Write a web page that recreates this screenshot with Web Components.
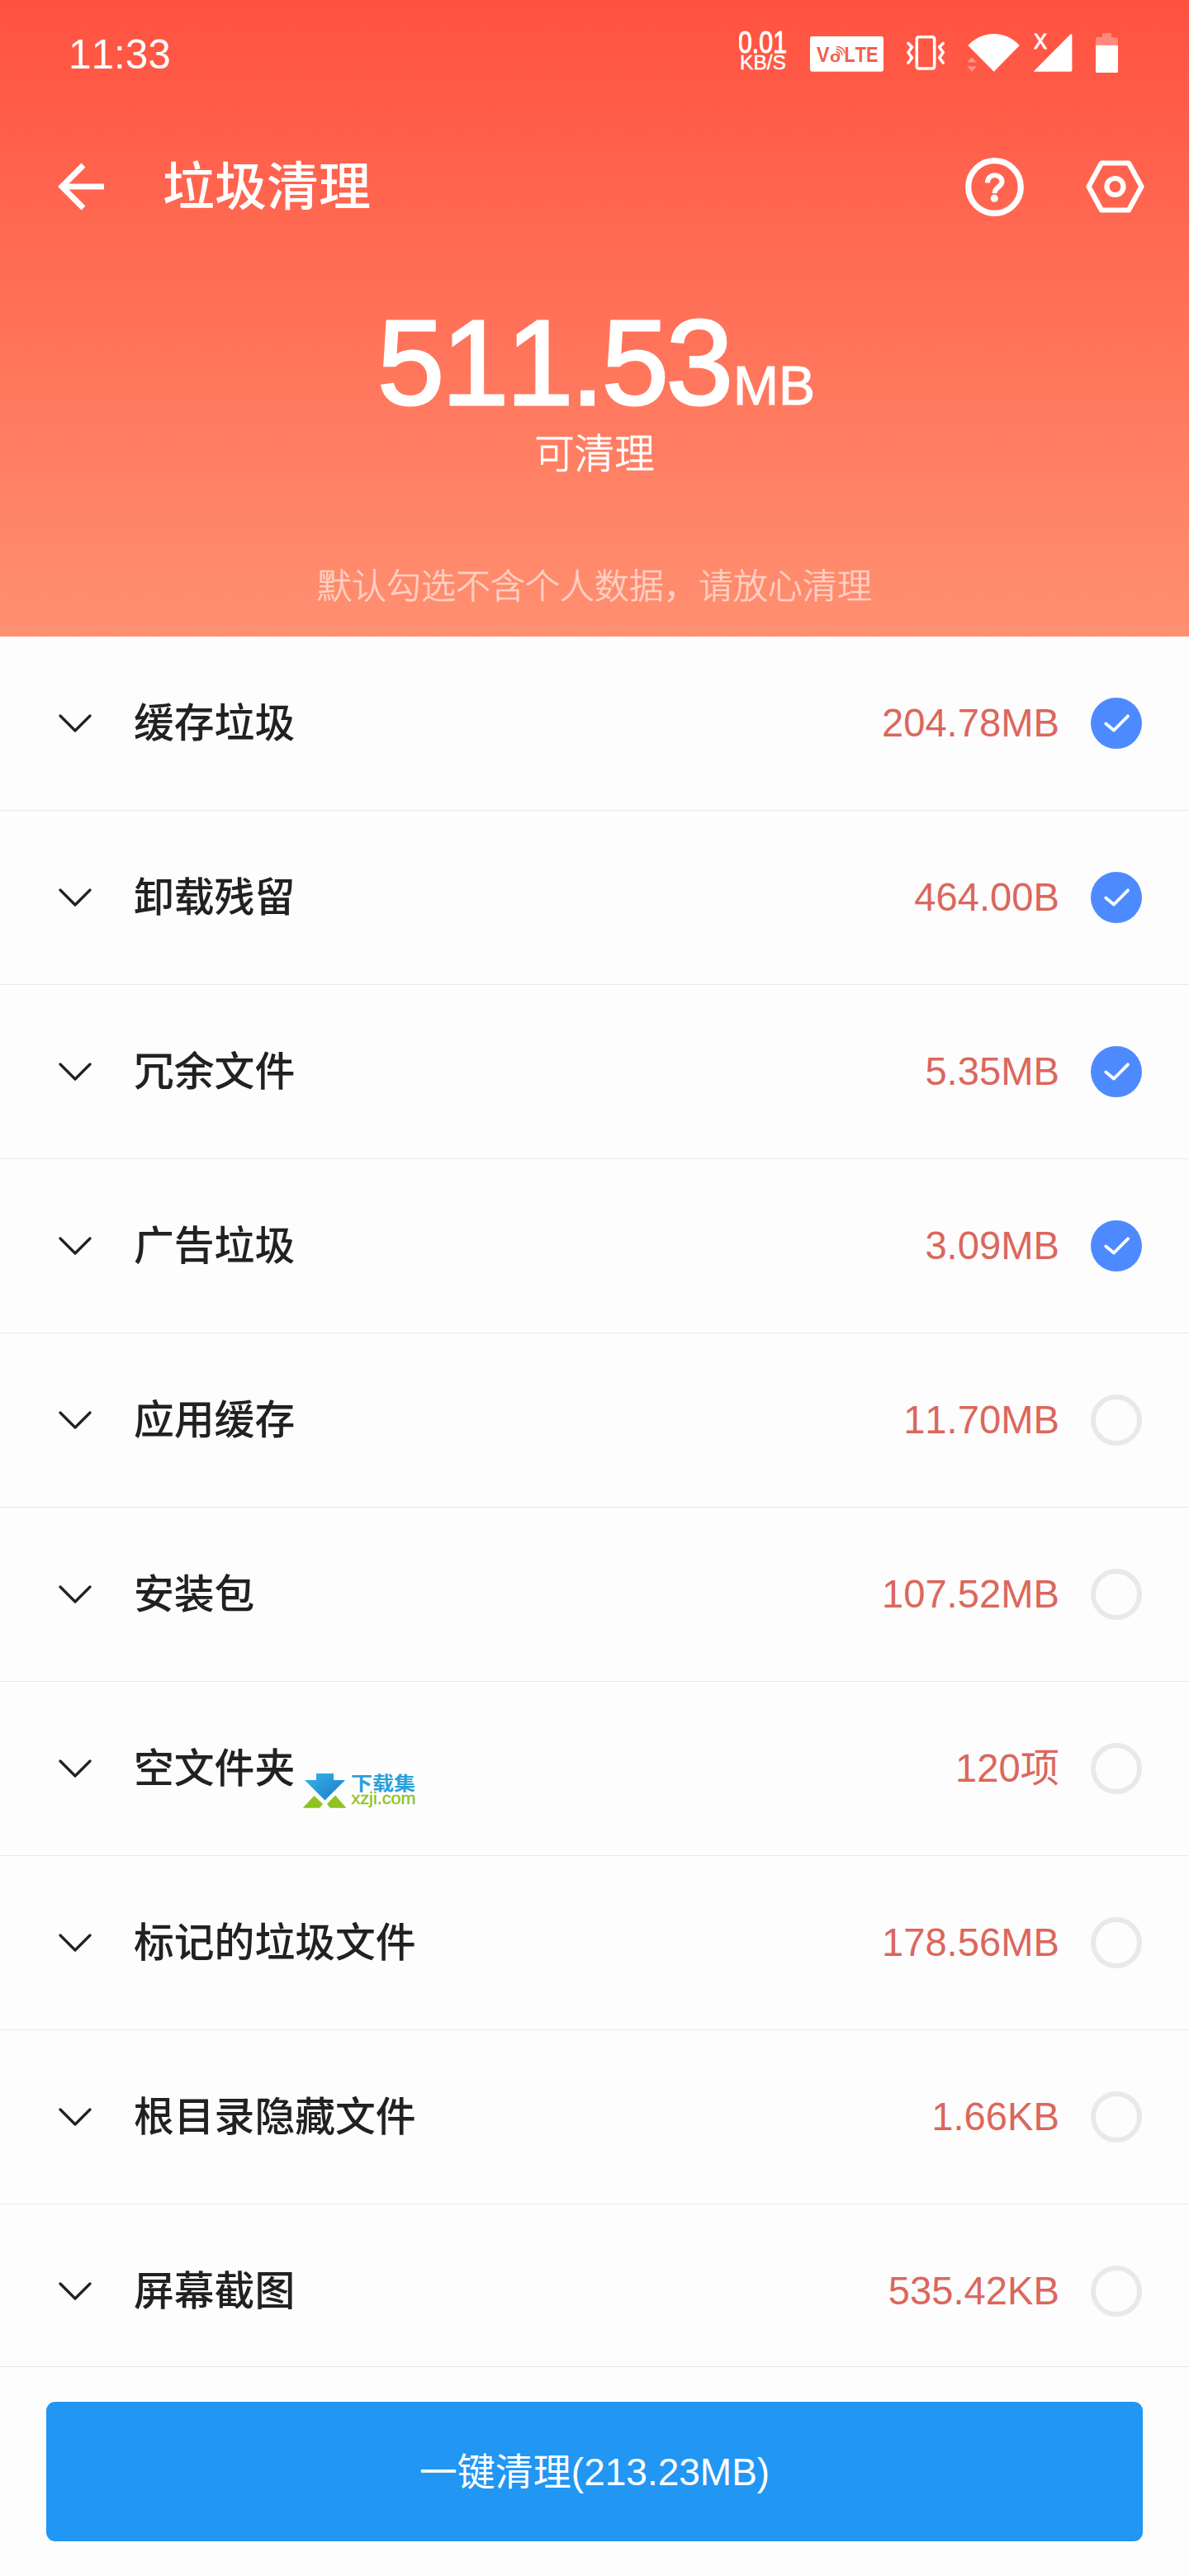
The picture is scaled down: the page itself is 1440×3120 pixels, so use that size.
<!DOCTYPE html>
<html lang="zh-CN">
<head>
<meta charset="utf-8">
<title>垃圾清理</title>
<style>
    body {
        margin: 0;
        background: #fdfdfd;
        font-family: "Liberation Sans", "Noto Sans CJK SC", sans-serif;
        font-kerning: none;
    }
</style>
</head>
<body>
<clean-page>
    <clean-header slot="header" total="511.53" unit="MB" caption="可清理">
        <status-bar slot="status" time="11:33"></status-bar>
        <app-bar slot="bar">垃圾清理</app-bar>
        默认勾选不含个人数据，请放心清理
    </clean-header>
    <junk-row size="204.78MB" checked>缓存垃圾</junk-row>
    <junk-row size="464.00B" checked>卸载残留</junk-row>
    <junk-row size="5.35MB" checked>冗余文件</junk-row>
    <junk-row size="3.09MB" checked>广告垃圾</junk-row>
    <junk-row size="11.70MB">应用缓存</junk-row>
    <junk-row size="107.52MB">安装包</junk-row>
    <junk-row size="120项">空文件夹<site-mark slot="mark"></site-mark></junk-row>
    <junk-row size="178.56MB">标记的垃圾文件</junk-row>
    <junk-row size="1.66KB">根目录隐藏文件</junk-row>
    <junk-row size="535.42KB">屏幕截图</junk-row>
    <clean-button slot="footer">一键清理(213.23MB)</clean-button>
</clean-page>

<script>
class CleanPage extends HTMLElement {
    constructor() {
        super();
        this.attachShadow({ mode: "open" });
        this.shadowRoot.innerHTML = `
        <style>
            :host {
                display: flex;
                flex-direction: column;
                width: 1440px;
                height: 3120px;
                overflow: hidden;
            }
            main {
                flex: 1;
                min-height: 0;
                overflow: hidden;
            }
        </style>
        <slot name="header"></slot>
        <main><slot></slot></main>
        <slot name="footer"></slot>
        `;
    }
}
customElements.define("clean-page", CleanPage);


class CleanHeader extends HTMLElement {
    constructor() {
        super();
        this.attachShadow({ mode: "open" });
        this.shadowRoot.innerHTML = `
        <style>
            :host {
                display: flex;
                flex-direction: column;
                flex: none;
                height: 771px;
                color: #fff;
                text-align: center;
                background: linear-gradient(#ff5240, #ff9071);
            }
            .total {
                margin-top: 38px;
                height: 160px;
                line-height: 160px;
                font-size: 146px;
                letter-spacing: -3.1px;
                padding-left: 4px;
                white-space: nowrap;
                -webkit-text-stroke: 3px #fff;
            }
            .unit {
                margin-left: 3px;
                font-size: 66px;
                letter-spacing: 0;
                -webkit-text-stroke: 1.2px #fff;
            }
            .caption {
                height: 60px;
                line-height: 60px;
                font-size: 48.5px;
                font-weight: 300;
                -webkit-text-stroke: .8px #fff;
            }
            .note {
                margin-top: 101px;
                height: 60px;
                line-height: 60px;
                font-size: 42px;
                font-weight: 300;
                color: #ffd0c4;
                -webkit-text-stroke: .7px #ffd0c4;
            }
        </style>
        <slot name="status"></slot>
        <slot name="bar"></slot>
        <div class="total">${this.getAttribute("total")}<span class="unit">${this.getAttribute("unit")}</span></div>
        <div class="caption">${this.getAttribute("caption")}</div>
        <div class="note"><slot></slot></div>
        `;
    }
}
customElements.define("clean-header", CleanHeader);


class StatusBar extends HTMLElement {
    constructor() {
        super();
        this.attachShadow({ mode: "open" });
        this.shadowRoot.innerHTML = `
        <style>
            :host {
                display: flex;
                align-items: center;
                height: 130px;
                padding: 0 86px 0 83px;
                box-sizing: border-box;
            }
            .time {
                flex: 1;
                text-align: left;
                font-size: 49.5px;
            }
            svg {
                display: block;
                height: 130px;
                fill: #fff;
            }
            .line {
                fill: none;
                stroke: #fff;
                stroke-width: 3.6;
                stroke-linejoin: round;
                stroke-linecap: round;
            }
            .brand {
                fill: #f0604c;
                font-weight: bold;
            }
        </style>
        <span class="time">${this.getAttribute("time")}</span>
        <svg width="86" viewBox="895 0 86 130">
            <text x="894" y="64" font-size="36.5" stroke="#fff" stroke-width="1" textLength="59" lengthAdjust="spacingAndGlyphs">0.01</text>
            <text x="896" y="84" font-size="23" stroke="#fff" stroke-width=".4" textLength="56" lengthAdjust="spacingAndGlyphs">KB/S</text>
        </svg>
        <svg width="117" viewBox="981 0 117 130">
            <rect x="981" y="44" width="89" height="42.7" rx="3"/>
            <g class="brand">
                <text x="989" y="75" font-size="26" textLength="15.5" lengthAdjust="spacingAndGlyphs">V</text>
                <text x="1005" y="75" font-size="19" textLength="13" lengthAdjust="spacingAndGlyphs">o</text>
                <text x="1022.5" y="75" font-size="26" textLength="41" lengthAdjust="spacingAndGlyphs">LTE</text>
            </g>
            <path d="M1012.5 62.5q4 .5 4.5 4.5M1012.5 59.5q7 .5 7.5 7.5M1013 56.5q9 .5 10 8" fill="none" stroke="#f0604c" stroke-width="1.5"/>
        </svg>
        <svg width="73" viewBox="1098 0 73 130">
            <rect class="line" x="1110.3" y="44.7" width="21.4" height="38.3" rx="2.5"/>
            <path class="line" d="M1100 52.500l4.500 4.500-4.500 6.500 4.500 6.500-4.500 6M1142.200 52.500l-4.500 4.500 4.500 6.500-4.500 6.500 4.500 6"/>
        </svg>
        <svg width="81" viewBox="1171 0 81 130">
            <path d="M1203.700 86.800L1172.300 55Q1186 41 1203.700 41T1234.800 55z"/>
            <path opacity=".35" d="M1171 75.500l6-6 6 6zM1171 80.300h12l-6 6.500z"/>
        </svg>
        <svg width="75" viewBox="1252 0 75 130">
            <text x="1252" y="59" font-size="25" stroke="#fff" stroke-width=".9" textLength="16" lengthAdjust="spacingAndGlyphs">X</text>
            <path d="M1252 86.200L1296.500 41.500Q1298.400 40 1298.400 42.500V85Q1298.400 86.800 1296.600 86.800H1253Q1251.500 86.800 1252 86.200z"/>
        </svg>
        <svg width="27" viewBox="1327 0 27 130">
            <path opacity=".3" d="M1327 54.700V46.500Q1327 45 1328.500 45H1335V40H1346V45H1352.500Q1354 45 1354 46.500V54.700z"/>
            <path d="M1327 54.700H1354V86.500Q1354 88 1352.500 88H1328.500Q1327 88 1327 86.500z"/>
        </svg>
        `;
    }
}
customElements.define("status-bar", StatusBar);


class AppBar extends HTMLElement {
    constructor() {
        super();
        this.attachShadow({ mode: "open" });
        this.shadowRoot.innerHTML = `
        <style>
            :host {
                display: flex;
                align-items: center;
                height: 192px;
                padding: 0 54px 0 70px;
                box-sizing: border-box;
            }
            h1 {
                flex: 1;
                margin: 0 0 0 70px;
                text-align: left;
                font-size: 63px;
                line-height: 90px;
                font-weight: 500;
            }
            svg {
                display: block;
                fill: none;
                stroke: #fff;
            }
            .settings {
                margin-left: 75px;
            }
        </style>
        <svg width="57" height="60" viewBox="0 0 57 60" stroke-width="7">
            <path d="M56 30H5M31 4L5 30l26 26"/>
        </svg>
        <h1><slot></slot></h1>
        <svg width="71" height="71" viewBox="0 0 71 71" stroke-width="7.2">
            <circle cx="35.5" cy="35.5" r="31.8"/>
            <path d="M27 30.500C27 17.500 44.500 19.500 44.500 29C44.500 35.500 35.500 35.500 35.500 43.200" stroke-width="6"/>
            <circle cx="35.3" cy="49.2" r="4.5" fill="#fff" stroke="none"/>
        </svg>
        <svg class="settings" width="71" height="64" viewBox="0 0 71 64" stroke-width="6.2" stroke-linejoin="round">
            <path d="M19 3.500H52L67.500 32L52 60.500H19L3.500 32z"/>
            <circle cx="35.5" cy="32" r="10"/>
        </svg>
        `;
    }
}
customElements.define("app-bar", AppBar);


class JunkRow extends HTMLElement {
    constructor() {
        super();
        this.attachShadow({ mode: "open" });

        const check = this.hasAttribute("checked")
            ? `<circle cx="31" cy="31" r="31" fill="#4e8aff"/>
               <path d="M18.300 31.500l9.700 8L45 22.300" stroke="#fff" stroke-width="3.8"/>`
            : `<circle cx="31" cy="31" r="28" stroke="#e9e9e9" stroke-width="6"/>`;
        this.shadowRoot.innerHTML = `
        <style>
            :host {
                position: relative;
                display: flex;
                align-items: center;
                height: 211px;
                box-sizing: border-box;
                padding: 0 57px 0 71px;
                border-bottom: 1px solid #e8e8e8;
                color: #212121;
            }
            .label {
                flex: 1;
                margin-left: 51px;
                font-size: 48.8px;
                line-height: 72px;
                font-weight: 500;
            }
            .size {
                margin-right: 38px;
                font-size: 47.2px;
                line-height: 72px;
                color: #db675c;
            }
            svg {
                display: block;
                fill: none;
                stroke-linecap: round;
                stroke-linejoin: round;
            }
        </style>
        <svg width="40" height="24" viewBox="0 0 40 24">
            <path d="M2 3l18 18L38 3" stroke="#212121" stroke-width="3.2"/>
        </svg>
        <span class="label"><slot></slot></span>
        <span class="size">${this.getAttribute("size")}</span>
        <svg width="62" height="62" viewBox="0 0 62 62">${check}</svg>
        <slot name="mark"></slot>
        `;
    }
}
customElements.define("junk-row", JunkRow);


// sello de la web de descargas, va encima de la fila
class SiteMark extends HTMLElement {
    constructor() {
        super();
        this.attachShadow({ mode: "open" });
        this.shadowRoot.innerHTML = `
        <style>
            :host {
                position: absolute;
                left: 366px;
                top: 109px;
            }
            svg {
                display: block;
                overflow: visible;
            }
        </style>
        <svg width="140" height="46" viewBox="366 2146 140 46">
            <defs>
                <linearGradient id="blue" x1="0" y1="0" x2="1" y2="1">
                    <stop offset="0" stop-color="#35b6e6"/>
                    <stop offset="1" stop-color="#1d78c8"/>
                </linearGradient>
            </defs>
            <path fill="url(#blue)" d="M383 2148H404V2156H418L393.500 2180.500L369 2156H383z"/>
            <path fill="#8fc31f" d="M366.700 2189.700L380.500 2175L391 2185L387 2189.700zM396 2185L406 2174.500L419.500 2189.700H400z"/>
            <text x="425" y="2167.500" font-family="Noto Sans CJK SC" font-weight="700" font-size="22.5" fill="#2a9fdc" textLength="78" lengthAdjust="spacingAndGlyphs">下载集</text>
            <text x="425.5" y="2185" font-size="20.5" fill="#8fc31f" stroke="#8fc31f" stroke-width=".4" textLength="78" lengthAdjust="spacingAndGlyphs">xzji.com</text>
        </svg>
        `;
    }
}
customElements.define("site-mark", SiteMark);


class CleanButton extends HTMLElement {
    constructor() {
        super();
        this.attachShadow({ mode: "open" });
        this.shadowRoot.innerHTML = `
        <style>
            :host {
                display: block;
                flex: none;
                height: 254px;
                box-sizing: border-box;
                padding: 42px 56px;
                border-top: 1px solid #e6e6e6;
            }
            button {
                display: block;
                width: 100%;
                height: 169px;
                padding: 0 0 7px;
                border: 0;
                border-radius: 11px;
                background: #2196f3;
                color: #fff;
                font-family: inherit;
                font-size: 46px;
            }
        </style>
        <button><slot></slot></button>
        `;
    }
}
customElements.define("clean-button", CleanButton);
</script>
</body>
</html>
